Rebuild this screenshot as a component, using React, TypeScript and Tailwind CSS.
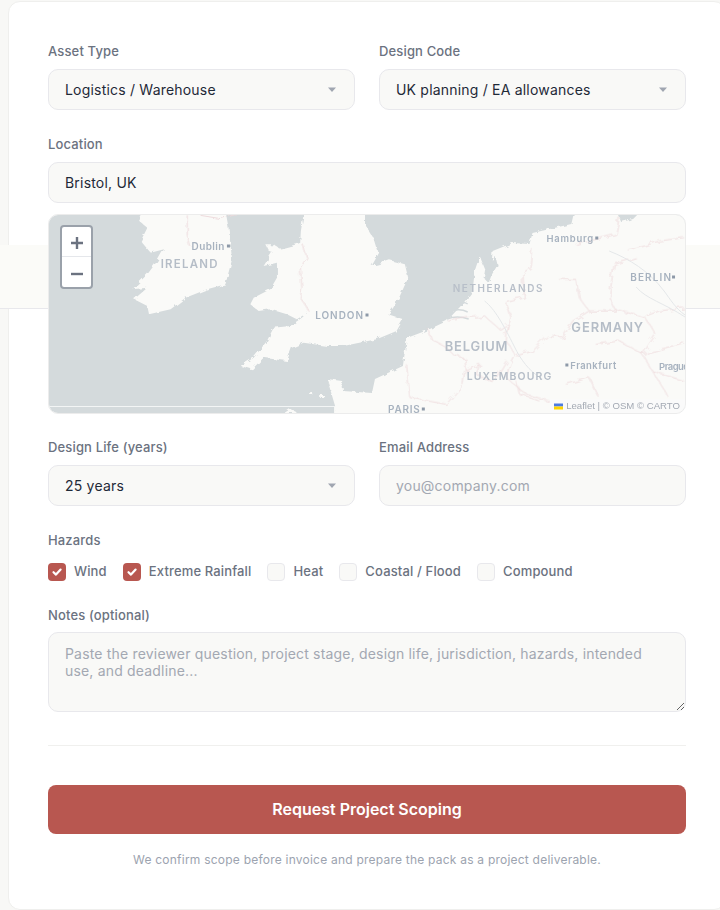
import React from "react";

const font = { fontFamily: "Inter, sans-serif" };

function Label({ children, gap = "mb-[9px]" }: { children: React.ReactNode; gap?: string }) {
  return (
    <label className={"block text-[13px] leading-[18px] font-medium tracking-[0.15px] text-[#6b7280] " + gap}>
      {children}
    </label>
  );
}

function SelectBox({ value }: { value: string }) {
  return (
    <div className="flex items-center justify-between h-[41px] px-4 rounded-[10px] border border-[#e8e8ec] bg-[#f9f9f7] text-[14px] tracking-[0.2px] text-[#1f2937]">
      <span>{value}</span>
      <svg width="10" height="6" viewBox="0 0 10 6" className="mr-[1px]">
        <path d="M1 0.5h8L5 5z" fill="#a0a6b1" />
      </svg>
    </div>
  );
}

function Check({ label, checked }: { label: string; checked?: boolean }) {
  return (
    <div className="flex items-center gap-2">
      {checked ? (
        <span className="flex items-center justify-center w-[18px] h-[18px] rounded-[4px] bg-[#b85750]">
          <svg width="12" height="12" viewBox="0 0 12 12" fill="none">
            <path d="M2.5 6.2 5 8.6l4.6-5" stroke="#fff" strokeWidth="2.2" strokeLinecap="round" strokeLinejoin="round" />
          </svg>
        </span>
      ) : (
        <span className="w-[18px] h-[18px] rounded-[4px] border border-[#e8e8ec] bg-[#f9f9f7]" />
      )}
      <span className="text-[13px] font-medium tracking-[0.15px] text-[#6b7280]">{label}</span>
    </div>
  );
}

function MapLabel({ x, y, w, size, text, color = "#a7b2bf" }: { x: number; y: number; w: number; size: number; text: string; color?: string }) {
  return (
    <text x={x} y={y} fontSize={size} fontWeight={600} fill={color} textLength={w} lengthAdjust="spacing" fontFamily="Inter, sans-serif">
      {text}
    </text>
  );
}

function MapDrawing() {
  return (
    <svg viewBox="48 214 638 198" preserveAspectRatio="none" className="block w-full h-full">
      <defs>
        <filter id="coast" x="-5%" y="-5%" width="110%" height="110%" colorInterpolationFilters="sRGB">
          <feTurbulence type="fractalNoise" baseFrequency="0.16" numOctaves="3" seed="4" result="n" />
          <feDisplacementMap in="SourceGraphic" in2="n" scale="5" />
          <feGaussianBlur stdDeviation="0.35" />
        </filter>
        <filter id="wiggle" x="-5%" y="-5%" width="110%" height="110%" colorInterpolationFilters="sRGB">
          <feTurbulence type="fractalNoise" baseFrequency="0.13" numOctaves="2" seed="9" result="n" />
          <feDisplacementMap in="SourceGraphic" in2="n" scale="7" />
          <feGaussianBlur stdDeviation="0.25" />
        </filter>
      </defs>

      <rect x="48" y="214" width="638" height="198" fill="#d4dadc" />

      {/* Ireland and Britain */}
      <g filter="url(#coast)">
        <g transform="translate(130 210) scale(0.3333)" fill="#fafaf8">
          <path d="M40 0 25 30l25 20-20 40 30 35 40-10-20 35-30 40-45 45 45-5-40 35 40 20 5 25 65-15 45-35 65-25 55-15 20-75-10-90-10-57z" />
          <path d="M522 0 512 60l-2 35-10 5-40 10-20 5-15 10-25 40 40-10v45l-20 35-50 25-10 20 25 20 35-5 50 15 30 15 40-25 15-15-40 35-35 25-50 5-20 40-40 50-40 25 35 10 35-35 70 10 15-40 35-15 70 10h50l100-20 60-25 20-35-45-15 15-20 20-35 25-55-10-40-45-12-35 12-20 5 20-35-15-50-25-40V0z" />
          <path d="M405 100h25l20 15-15 12-20-8z" />
        </g>

        {/* Continent coast */}
        <path
          d="M575 210 572 223 533 232 530 243 513 242 493 250 492 262 487 272 480 255 475 270 473 290 463 303 447 320 428 329 407 337 403 365 375 378 372 392 343 390 342 380 327 378 335 405 335 418H690V210Z"
          fill="#fafaf8"
        />
        <path d="M617 210h25l-8 8-12 3z" fill="#d4dadc" />
        <path d="M488 262l8-6 2 8-6 10-3 8-4-4z" fill="#d4dadc" />
        <path d="M284 412l6-4 8 4z" fill="#fafaf8" />
        <path d="M320 394h4v3h-4zM310 391h2v3h-2z" fill="#fafaf8" />
      </g>

      {/* Rhine delta */}
      <g fill="none" stroke="#d4dadc" strokeWidth="1.4">
        <path d="M447 318c8-3 16-2 22 0M452 310c6-2 12-1 16 1M456 303c6-2 9-2 12 0" />
      </g>

      {/* Country borders */}
      <g filter="url(#wiggle)">
        <g transform="translate(130 210) scale(0.3333)" fill="none" stroke="#eddadc" strokeWidth="3">
          <path d="M518 100l12 40-20 30 5 60-5 30 30 45" />
          <path d="M170 13v60l10 35M210 13l60 10 45-12" />
        </g>
        <g transform="translate(360 200) scale(0.3333)" fill="none" stroke="#eed9db" strokeWidth="2.6">
          <path d="M205 385l10 30 45 25 25 25 30 5 5 40 40-20-10 30 50 25 40-65" />
          <path d="M265 360l55-10 55-5 45 40 25-15-5 50 25 40" />
          <path d="M520 145l-5 55-25 15 5 75-55 15 15 45-20 50" />
          <path d="M465 460l-15 30-10 40 60 50 70 20" />
          <path d="M600 235h50l10 55 30 40-50 30-30 50-45-5-45 45-50 15" />
          <path d="M690 330h80l-20-40 15-100 65-20" />
          <path d="M770 325l90 25 30 50-40 60 30 50 95 30" />
          <path d="M975 320l-75 10-40 15M710 430l70-10 70 40 125-35" />
          <path d="M620 550l70-20 30 60M880 510l50 80" />
          <path d="M650 130l120-30 10-50M810 150l90-30 75-10" />
          <path d="M140 490l10 100 110 20 50-60 5-40M470 540l10 40 60 20" />
        </g>
      </g>

      {/* Roads */}
      <g fill="none" stroke="#e4e7e9" strokeWidth="1">
        <path d="M485 300c10 8 18 22 30 46 6 12 14 24 28 32M610 250c20 8 40 20 55 40 6 8 12 18 21 24M637 286c10 12 28 16 49 30" />
      </g>

      {/* Tile seam */}
      <line x1="48" y1="405.5" x2="335" y2="405.5" stroke="#f3f5f5" strokeWidth="1" />

      {/* Place names */}
      <MapLabel x={191} y={249} w={33} size={10} text="Dublin" />
      <MapLabel x={160} y={267} w={57} size={11.5} text="IRELAND" color="#b5bdc7" />
      <MapLabel x={315} y={318} w={48} size={10} text="LONDON" />
      <MapLabel x={547} y={241} w={47} size={9.5} text="Hamburg" />
      <MapLabel x={631} y={280} w={41} size={10} text="BERLIN" />
      <MapLabel x={453} y={291} w={90} size={10} text="NETHERLANDS" color="#b8bfc9" />
      <MapLabel x={445} y={350} w={63} size={13} text="BELGIUM" color="#b5bdc7" />
      <MapLabel x={572} y={331} w={72} size={13} text="GERMANY" color="#b5bdc7" />
      <MapLabel x={467} y={379} w={85} size={10.5} text="LUXEMBOURG" color="#b5bdc7" />
      <MapLabel x={571} y={368} w={46} size={9.5} text="Frankfurt" />
      <MapLabel x={660} y={369} w={30} size={9.5} text="Prague" />
      <MapLabel x={388} y={412} w={32} size={10} text="PARIS" />

      <g fill="#8d99a8">
        <rect x="226.5" y="243.5" width="3" height="3" />
        <rect x="365.5" y="312.5" width="3" height="3" />
        <rect x="596" y="235.5" width="3" height="3" />
        <rect x="673" y="274.5" width="3" height="3" />
        <rect x="566" y="362.5" width="3" height="3" />
        <rect x="422" y="406.5" width="3" height="3" />
      </g>
    </svg>
  );
}

function LeafletMap() {
  return (
    <div className="relative z-10 h-[200px] mt-[11px] rounded-[10px] overflow-hidden border border-[#ececec]">
      <MapDrawing />
      <div className="absolute left-[11px] top-[10px] w-[33px] rounded-[4px] border-2 border-[#9aa1aa] bg-white">
        <div className="flex items-center justify-center h-[30px] border-b border-[#e5e7eb]">
          <svg width="14" height="14" viewBox="0 0 14 14" className="mt-[3px]">
            <path d="M7 1v12M1 7h12" stroke="#6b7280" strokeWidth="2.4" />
          </svg>
        </div>
        <div className="flex items-center justify-center h-[30px]">
          <svg width="14" height="14" viewBox="0 0 14 14" className="mt-[3px]">
            <path d="M1 7h12" stroke="#6b7280" strokeWidth="2.4" />
          </svg>
        </div>
      </div>
      <div
        className="absolute right-0 bottom-0 flex items-center gap-[3px] h-[14px] pl-[4px] pr-[5px] bg-[#fafafa] text-[9.6px] leading-none text-[#a3a9b3]"
        style={{ fontFamily: "'Liberation Sans', sans-serif" }}
      >
        <svg width="9" height="7" viewBox="0 0 12 8">
          <rect width="12" height="4" fill="#4c7be1" />
          <rect y="4" width="12" height="4" fill="#ffd500" />
        </svg>
        <span>Leaflet | © OSM © CARTO</span>
      </div>
    </div>
  );
}

export default function App() {
  return (
    <div className="relative w-[720px] h-[910px] overflow-hidden bg-[#f8f8f6] pl-2 pt-px" style={font}>
      <div className="w-[718px] h-[909px] rounded-xl border border-[#efefed] bg-white px-[39px] pt-[40px]">
        <div className="grid grid-cols-2 gap-x-6 w-[638px]">
          <div>
            <Label>Asset Type</Label>
            <SelectBox value="Logistics / Warehouse" />
          </div>
          <div>
            <Label>Design Code</Label>
            <SelectBox value="UK planning / EA allowances" />
          </div>
        </div>

        <div className="w-[638px] mt-[25px]">
          <Label>Location</Label>
          <input
            readOnly
            value="Bristol, UK"
            className="block w-full h-[41px] px-4 rounded-[10px] border border-[#e8e8ec] bg-[#f9f9f7] text-[14px] tracking-[0.2px] text-[#1f2937] outline-none"
          />
          <LeafletMap />
        </div>

        <div className="grid grid-cols-2 gap-x-6 w-[638px] mt-[24px]">
          <div>
            <Label>Design Life (years)</Label>
            <SelectBox value="25 years" />
          </div>
          <div>
            <Label>Email Address</Label>
            <input
              placeholder="you@company.com"
              className="block w-full h-[41px] px-4 rounded-[10px] border border-[#e8e8ec] bg-[#f9f9f7] text-[14px] tracking-[0.2px] placeholder:text-[#a3a8b2] outline-none"
            />
          </div>
        </div>

        <div className="w-[638px] mt-[25px]">
          <Label gap="mb-[13px]">Hazards</Label>
          <div className="flex items-center gap-4">
            <Check label="Wind" checked />
            <Check label="Extreme Rainfall" checked />
            <Check label="Heat" />
            <Check label="Coastal / Flood" />
            <Check label="Compound" />
          </div>
        </div>

        <div className="w-[638px] mt-[24px]">
          <Label gap="mb-[8px]">Notes (optional)</Label>
          <textarea
            placeholder="Paste the reviewer question, project stage, design life, jurisdiction, hazards, intended use, and deadline..."
            className="block w-full h-[80px] px-4 py-[12px] rounded-[10px] border border-[#e8e8ec] bg-[#f9f9f7] text-[14px] leading-[17.5px] tracking-[0.18px] placeholder:text-[#a3a8b2] outline-none"
          />
        </div>

        <div className="w-[638px] h-px bg-[#f0f0ee] mt-[33px]" />

        <button className="block w-[638px] h-[49px] mt-[39px] rounded-lg bg-[#b85750] text-white text-[16px] font-semibold">
          Request Project Scoping
        </button>

        <p className="w-[638px] mt-[18px] text-center text-[12px] leading-[16px] tracking-[0.225px] text-[#9ca3af]">
          We confirm scope before invoice and prepare the pack as a project deliverable.
        </p>
      </div>

      {/* pale band that sits behind the map */}
      <div className="absolute left-0 top-[245px] w-[720px] h-[64px] bg-[#fbfbf8] border-b border-[#e8e8ec]" />
    </div>
  );
}
